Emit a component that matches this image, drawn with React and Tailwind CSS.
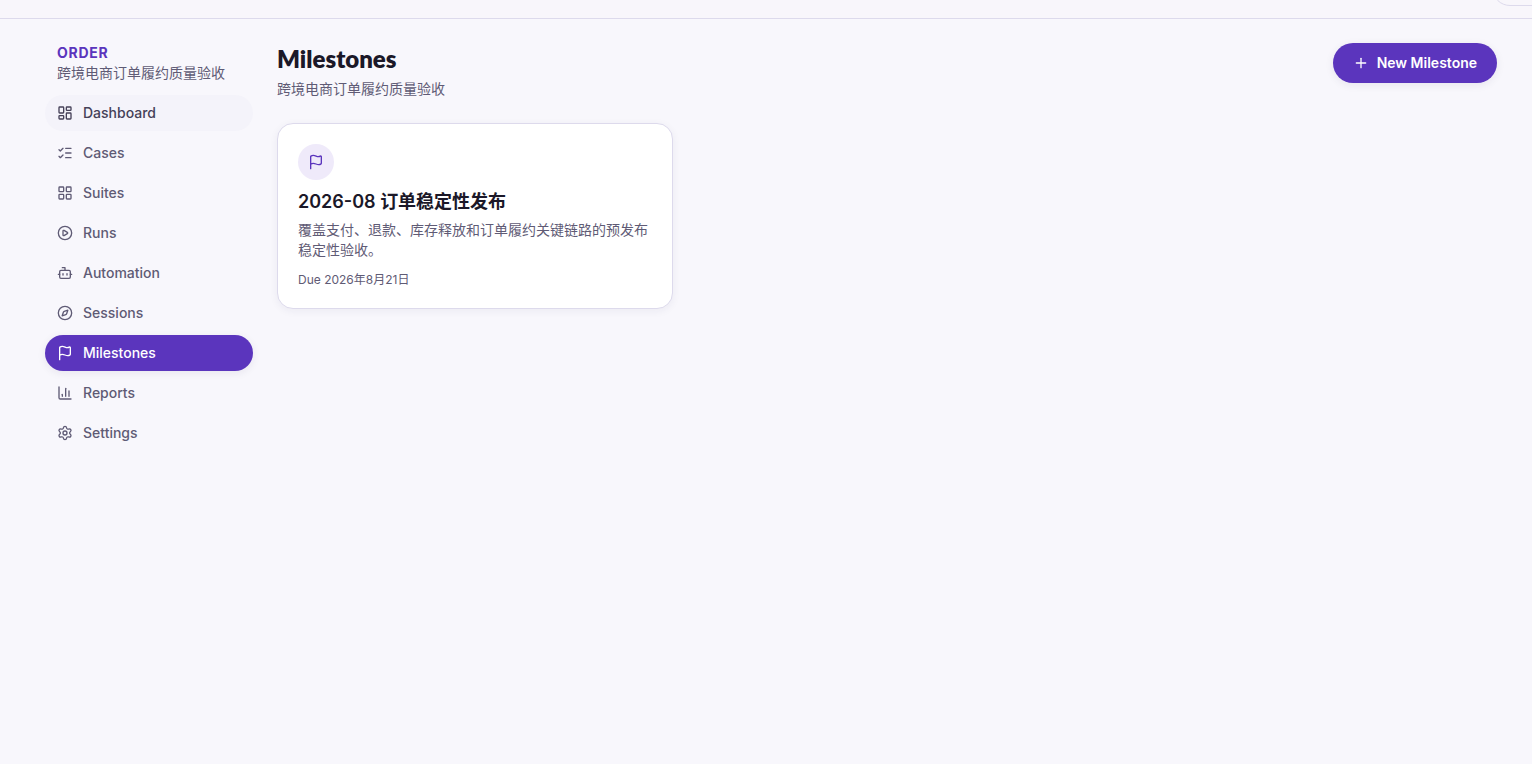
import React from 'react';
import {
  Bot,
  CirclePlay,
  Compass,
  Flag,
  LayoutDashboard,
  LayoutGrid,
  ListChecks,
  Plus,
  Settings,
} from 'lucide-react';

function ReportsIcon({ className }) {
  return (
    <svg
      className={className}
      viewBox="0 0 24 24"
      fill="none"
      stroke="currentColor"
      strokeWidth="2"
      strokeLinecap="round"
      strokeLinejoin="round"
      aria-hidden="true"
    >
      <path d="M3 3v16a2 2 0 0 0 2 2h16" />
      <path d="M18 17V9" />
      <path d="M13 17V5" />
      <path d="M8 17v-3" />
    </svg>
  );
}

const project = { key: 'ORDER', name: '跨境电商订单履约质量验收' };

const navItems = [
  { label: 'Dashboard', icon: LayoutDashboard, hovered: true },
  { label: 'Cases', icon: ListChecks },
  { label: 'Suites', icon: LayoutGrid },
  { label: 'Runs', icon: CirclePlay },
  { label: 'Automation', icon: Bot },
  { label: 'Sessions', icon: Compass },
  { label: 'Milestones', icon: Flag, active: true },
  { label: 'Reports', icon: ReportsIcon },
  { label: 'Settings', icon: Settings },
];

const milestones = [
  {
    id: 1,
    title: '2026-08 订单稳定性发布',
    description: '覆盖支付、退款、库存释放和订单履约关键链路的预发布稳定性验收。',
    due: '2026年8月21日',
  },
];

function navClass(item) {
  if (item.active) return 'bg-[#5b35bd] text-white shadow-[0_2px_8px_rgba(40,30,80,0.08)]';
  if (item.hovered) return 'bg-[#f4f3fa] text-[#454158]';
  return 'text-[#5f5b75] hover:bg-[#f4f3fa]';
}

function Sidebar() {
  return (
    <aside className="w-52 shrink-0">
      <div className="px-3 pb-3 text-sm leading-5">
        <p className="font-bold tracking-wider text-[#5b35bd]">{project.key}</p>
        <p className="text-[#5f5b75]">{project.name}</p>
      </div>
      <nav className="flex flex-col gap-1">
        {navItems.map((item) => {
          const Icon = item.icon;
          return (
            <a
              key={item.label}
              href="#"
              aria-current={item.active ? 'page' : undefined}
              className={`flex h-9 items-center gap-2.5 rounded-full px-3 text-sm font-medium ${navClass(item)}`}
            >
              <Icon className="size-4" />
              {item.label}
            </a>
          );
        })}
      </nav>
    </aside>
  );
}

function MilestoneCard({ milestone }) {
  return (
    <article className="rounded-2xl border border-[#dddaec] bg-white p-5 shadow-[0_2px_8px_rgba(40,30,80,0.06)]">
      <div className="flex size-9 items-center justify-center rounded-full bg-[#efeafa] text-[#5b35bd]">
        <Flag className="size-4" />
      </div>
      <h2 className="mt-2 text-lg font-semibold leading-7 text-[#1b1828]">{milestone.title}</h2>
      <p className="mt-1 text-sm leading-5 text-[#5f5b75]">{milestone.description}</p>
      <p className="mt-3 text-xs leading-4 text-[#5f5b75]">Due {milestone.due}</p>
    </article>
  );
}

function App() {
  return (
    <div className="min-h-screen bg-[#f8f7fc] font-['Inter','Noto_Sans_CJK_SC',sans-serif] text-[#1b1828]">
      <header className="flex h-[19px] items-end justify-end overflow-hidden border-b border-[#dddaec] bg-[#f8f6fb] pb-3">
        <button
          type="button"
          aria-label="Account"
          className="-mr-6 h-9 w-16 shrink-0 rounded-full border border-[#dddaec]"
        />
      </header>

      <div className="flex gap-6 pt-6 pr-[35px] pl-[45px]">
        <Sidebar />
        <main className="min-w-0 flex-1">
          <div className="flex items-start justify-between">
            <div>
              <h1 className="font-['Lato',sans-serif] text-2xl font-extrabold leading-8">Milestones</h1>
              <p className="mt-1 text-sm leading-5 text-[#5f5b75]">{project.name}</p>
            </div>
            <button
              type="button"
              className="flex h-10 items-center gap-2 rounded-full bg-[#5b35bd] px-5 text-sm font-semibold text-white shadow-[0_2px_8px_rgba(40,30,80,0.08)]"
            >
              <Plus className="size-4" />
              New Milestone
            </button>
          </div>

          <div className="mt-6 grid gap-4 md:grid-cols-2 lg:grid-cols-3">
            {milestones.map((milestone) => (
              <MilestoneCard key={milestone.id} milestone={milestone} />
            ))}
          </div>
        </main>
      </div>
    </div>
  );
}

export default App;
